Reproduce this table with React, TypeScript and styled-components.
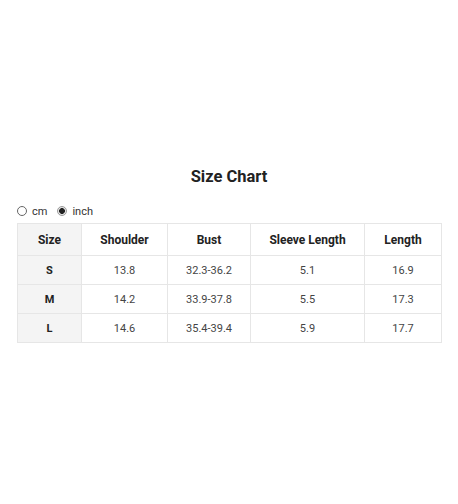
import React from "react";
import styled, { createGlobalStyle } from "styled-components";

const Global = createGlobalStyle`
  html, body { margin: 0; padding: 0; background: #fff; }
  body { font-family: Roboto, "Liberation Sans", Arial, sans-serif; color: #222; }
`;

const Page = styled.div`
  width: 458px;
  height: 504px;
  padding: 166px 17px 0 17px;
  box-sizing: border-box;
`;

const Title = styled.h2`
  margin: 0;
  text-align: center;
  font-size: 16.5px;
  line-height: 22px;
  font-weight: 700;
  color: #222;
`;

const UnitRow = styled.div`
  display: flex;
  align-items: center;
  gap: 10px;
  margin-top: 15px;
  height: 16px;
  font-size: 11px;
  color: #333;
`;

const UnitOption = styled.label`
  display: flex;
  align-items: center;
  gap: 5px;
`;

const Radio = styled.span<{ $checked?: boolean }>`
  width: 10px;
  height: 10px;
  border-radius: 50%;
  box-sizing: border-box;
  border: 1px solid ${(p) => (p.$checked ? "#9a9a9a" : "#666")};
  background: ${(p) => (p.$checked ? "radial-gradient(circle, #222 0 2.6px, #e6e6e6 3.2px)" : "#fff")};
`;

const Table = styled.table`
  margin-top: 4px;
  width: 424px;
  border-collapse: collapse;
  table-layout: fixed;
  font-size: 11px;
  color: #333;
`;

const HeadCell = styled.th<{ $shade?: boolean }>`
  height: 31px;
  padding: 0;
  border: 1px solid #e6e6e6;
  font-size: 12px;
  font-weight: 700;
  color: #222;
  text-align: center;
  background: ${(p) => (p.$shade ? "#f4f4f4" : "#fff")};
`;

const Cell = styled.td<{ $shade?: boolean }>`
  height: 28px;
  padding: 0;
  border: 1px solid #e6e6e6;
  text-align: center;
  font-weight: ${(p) => (p.$shade ? 700 : 400)};
  color: ${(p) => (p.$shade ? "#222" : "#444")};
  background: ${(p) => (p.$shade ? "#f4f4f4" : "#fff")};
`;

const widths = [64, 86, 83, 114, 77];
const headers = ["Size", "Shoulder", "Bust", "Sleeve Length", "Length"];
const rows = [
  ["S", "13.8", "32.3-36.2", "5.1", "16.9"],
  ["M", "14.2", "33.9-37.8", "5.5", "17.3"],
  ["L", "14.6", "35.4-39.4", "5.9", "17.7"],
];

export default function App() {
  return (
    <>
      <Global />
      <Page>
        <Title>Size Chart</Title>
        <UnitRow>
          <UnitOption>
            <Radio />
            cm
          </UnitOption>
          <UnitOption>
            <Radio $checked />
            inch
          </UnitOption>
        </UnitRow>
        <Table>
          <colgroup>
            {widths.map((w, i) => (
              <col key={i} style={{ width: w }} />
            ))}
          </colgroup>
          <thead>
            <tr>
              {headers.map((h, i) => (
                <HeadCell key={h} $shade={i === 0}>
                  {h}
                </HeadCell>
              ))}
            </tr>
          </thead>
          <tbody>
            {rows.map((r) => (
              <tr key={r[0]}>
                {r.map((c, i) => (
                  <Cell key={i} $shade={i === 0}>
                    {c}
                  </Cell>
                ))}
              </tr>
            ))}
          </tbody>
        </Table>
      </Page>
    </>
  );
}
